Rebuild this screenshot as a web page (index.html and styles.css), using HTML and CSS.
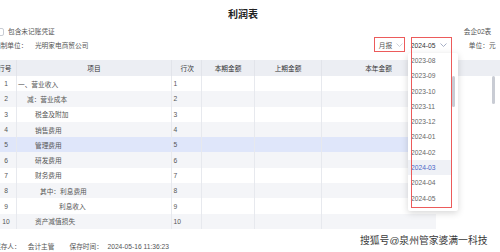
FILE: index.html
```html
<!DOCTYPE html>
<html lang="zh">
<head>
<meta charset="utf-8">
<link rel="stylesheet" href="styles.css">
</head>
<body>
<div class="page">
  <div class="title">利润表</div>
  <div class="meta1">
    <label class="check"><span class="box"></span><span>包含未记账凭证</span></label>
    <span class="code">会企02表</span>
  </div>
  <div class="meta2">
    <div class="org"><span>编制单位：</span><span>光明家电商贸公司</span></div>
    <div class="tools">
      <div class="select sel-type"><span>月报</span>
        <svg class="chev" width="7" height="4" viewBox="0 0 7 4"><polyline points="0.5,0.5 3.5,3.5 6.5,0.5"/></svg>
      </div>
      <div class="select sel-period"><span>2024-05</span>
        <svg class="chev dark" width="7" height="4" viewBox="0 0 7 4"><polyline points="0.5,0.5 3.5,3.5 6.5,0.5"/></svg>
      </div>
      <span class="unit">单位：元</span>
    </div>
  </div>

  <div class="table">
    <div class="row head">
      <div class="c c1 hl">行号</div>
      <div class="c c2">项目</div>
      <div class="c c3">行次</div>
      <div class="c c4">本期金额</div>
      <div class="c c5">上期金额</div>
      <div class="c c6">本年金额</div>
      <div class="c c7"></div>
    </div>
    <div class="row"><div class="c c1">1</div><div class="c c2 l0">一、营业收入</div><div class="c c3">1</div><div class="c c4"></div><div class="c c5"></div><div class="c c6"></div></div>
    <div class="row alt"><div class="c c1">2</div><div class="c c2 l1">减：营业成本</div><div class="c c3">2</div><div class="c c4"></div><div class="c c5"></div><div class="c c6"></div></div>
    <div class="row"><div class="c c1">3</div><div class="c c2 l2">税金及附加</div><div class="c c3">3</div><div class="c c4"></div><div class="c c5"></div><div class="c c6"></div></div>
    <div class="row alt"><div class="c c1">4</div><div class="c c2 l2">销售费用</div><div class="c c3">4</div><div class="c c4"></div><div class="c c5"></div><div class="c c6"></div></div>
    <div class="row sel"><div class="c c1">5</div><div class="c c2 l2">管理费用</div><div class="c c3">5</div><div class="c c4"></div><div class="c c5"></div><div class="c c6"></div></div>
    <div class="row alt"><div class="c c1">6</div><div class="c c2 l2">研发费用</div><div class="c c3">6</div><div class="c c4"></div><div class="c c5"></div><div class="c c6"></div></div>
    <div class="row"><div class="c c1">7</div><div class="c c2 l2">财务费用</div><div class="c c3">7</div><div class="c c4"></div><div class="c c5"></div><div class="c c6"></div></div>
    <div class="row alt"><div class="c c1">8</div><div class="c c2 l3">其中：利息费用</div><div class="c c3">8</div><div class="c c4"></div><div class="c c5"></div><div class="c c6"></div></div>
    <div class="row"><div class="c c1">9</div><div class="c c2 l4">利息收入</div><div class="c c3">9</div><div class="c c4"></div><div class="c c5"></div><div class="c c6"></div></div>
    <div class="row alt"><div class="c c1">10</div><div class="c c2 l2">资产减值损失</div><div class="c c3">10</div><div class="c c4"></div><div class="c c5"></div><div class="c c6"></div></div>
    <div class="tscroll"></div>
  </div>

  <div class="footer">
    <span>保存人：</span><span class="v1">会计主管</span>
    <span class="k2">保存时间：</span><span class="v2">2024-05-16 11:36:23</span>
  </div>

  <div class="dropdown">
    <div class="opt">2023-08</div>
    <div class="opt">2023-09</div>
    <div class="opt">2023-10</div>
    <div class="opt">2023-11</div>
    <div class="opt">2023-12</div>
    <div class="opt">2024-01</div>
    <div class="opt">2024-02</div>
    <div class="opt active">2024-03</div>
    <div class="opt">2024-04</div>
    <div class="opt">2024-05</div>
    <div class="dscroll"></div>
  </div>
  <div class="mark"></div>

  <div class="watermark">搜狐号@泉州管家婆满一科技</div>
</div>
</body>
</html>
```

FILE: styles.css
```css
* { box-sizing: border-box; margin: 0; padding: 0; }
body {
  margin: 0;
  font-family: "Liberation Sans", "Noto Sans CJK SC", sans-serif;
  font-size: 6.7px;
  color: #555;
  background: #fff;
}
.page { position: relative; width: 500px; height: 252px; overflow: hidden; }

.title {
  width: 486px; height: 26px; padding-top: 9px;
  line-height: 12px; font-size: 10px; font-weight: bold;
  color: #222; text-align: center;
}

.meta1 {
  display: flex; justify-content: space-between; align-items: center;
  height: 12px; line-height: 12px; margin-left: -4px; padding-right: 8.7px;
}
.check { display: flex; align-items: center; gap: 4px; }
.box { width: 8px; height: 8px; border: 1px solid #c8ccd4; border-radius: 2px; background: #fff; }

.meta2 {
  display: flex; justify-content: space-between; align-items: center;
  height: 15px; margin-top: -1px; margin-bottom: 8px; margin-left: -6px; padding-right: 4.4px;
}
.org { display: flex; gap: 7.5px; padding-top: 2px; line-height: 13px; }
.tools { display: flex; align-items: center; }
.select {
  display: flex; align-items: center; justify-content: space-between;
  height: 15px; padding-top: 2px; line-height: 13px;
}
.sel-type { width: 31px; border: 1px solid #ec5b5b; padding-left: 4px; padding-right: 1px; }
.sel-period { width: 41px; margin-left: 6px; padding-right: 5px; color: #333; }
.chev { display: block; margin-top: -1px; }
.chev polyline { fill: none; stroke: #c3c7cf; stroke-width: 0.8; }
.chev.dark polyline { stroke: #8f9ab8; }
.unit { margin-left: 17px; padding-top: 2px; line-height: 13px; }

.table { position: relative; margin-left: -4px; width: 504px; }
.row {
  display: grid;
  grid-template-columns: 21px 155px 30px 53px 67px 114px;
  height: 15.3px; width: 440px;
}
.row.head {
  grid-template-columns: 21px 155px 30px 53px 67px 114px 1fr;
  height: 16px; width: 504px; background: #eceef3; color: #333;
}
.row.alt { background: #f4f5f8; }
.row.sel { background: #dfe6fa; }
.c { display: flex; align-items: center; border-right: 1px solid #e7e9ee; white-space: nowrap; }
.head .c { justify-content: center; border-right-color: #e2e4ea; }
.head .c.hl { justify-content: flex-start; padding-left: 2px; }
.c1 { justify-content: center; }
.c3 { padding-left: 1.5px; }
.c6, .c7 { border-right: none; }
.head .c6 { border-right: 1px solid #e2e4ea; }
.l0 { padding-left: 1px; }
.l1 { padding-left: 10px; }
.l2 { padding-left: 18px; }
.l3 { padding-left: 23px; }
.l4 { padding-left: 42px; }
.tscroll {
  position: absolute; left: 496px; top: 16px; width: 3px; height: 28px;
  border-radius: 2px; background: #c9ccd4;
}

.footer {
  display: flex; align-items: center; height: 10px; line-height: 10px;
  margin-top: 13px; margin-left: -6px;
}
.v1 { margin-left: 7px; }
.k2 { margin-left: 15px; }
.v2 { margin-left: 4.5px; }

.dropdown {
  position: absolute; left: 408px; top: 53px; width: 50px; height: 158px;
  background: #fff; border-radius: 2px;
  box-shadow: 0 2px 7px rgba(0, 0, 0, 0.16);
  z-index: 2;
}
.opt { width: 44px; height: 15.3px; line-height: 15.3px; padding-left: 3px; color: #666; }
.opt.active { background: #eff1f6; color: #4b66c6; }
.dscroll {
  position: absolute; left: 44px; top: 23px; width: 3px; height: 31px;
  border-radius: 2px; background: #c9ccd4;
}
.mark {
  position: absolute; left: 411px; top: 37px; width: 41px; height: 171px;
  border: 1px solid #ec5b5b; z-index: 3;
}

.watermark {
  position: absolute; left: 360px; top: 235px;
  font-size: 9.8px; line-height: 12px; color: #3a3a3a; white-space: nowrap;
  text-shadow: 0 0 2px #fff, 0 0 2px #fff;
  z-index: 4;
}
```
